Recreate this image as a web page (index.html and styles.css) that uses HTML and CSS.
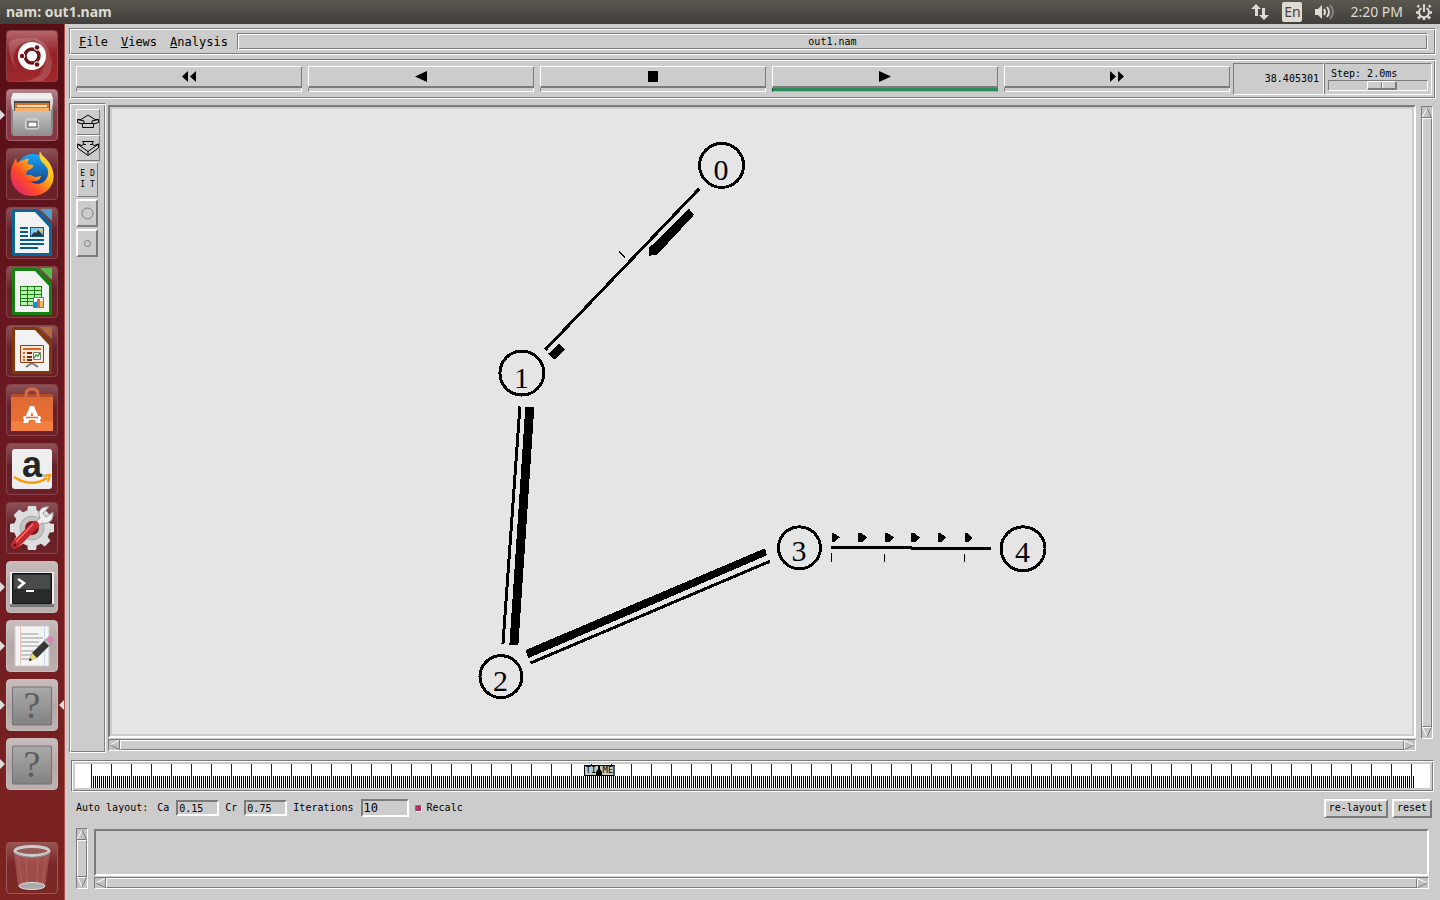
FILE: index.html
```html
<!DOCTYPE html>
<html lang="en">
<head>
<meta charset="utf-8">
<title>nam: out1.nam</title>
<link rel="stylesheet" href="styles.css">
</head>
<body>
<header class="panel">
  <span class="panel-title">nam: out1.nam</span>
  <div class="tray">
    <svg width="18" height="18" viewBox="0 0 18 18" fill="#dfdbd2"><path d="M5 1l5 5H7v7H4V6H0zM13 17l-5-5h3V5h3v7h4z"/></svg>
    <span class="lang">En</span>
    <svg width="20" height="16" viewBox="0 0 20 16"><path d="M0 5h3l4-4v14l-4-4H0z" fill="#dfdbd2"/><g fill="none" stroke-width="2"><path d="M9 5q2 3 0 6" stroke="#dfdbd2"/><path d="M12 3q4 5 0 10" stroke="#dfdbd2"/><path d="M15 1q6 7 0 14" stroke="#85827b"/></g></svg>
    <span class="clock">2:20 PM</span>
    <svg width="16" height="16" viewBox="0 0 16 16" fill="none" stroke="#dfdbd2"><path d="M5.500 4a5 5 0 1 0 5 0" stroke-width="2"/><path d="M8 0v8" stroke-width="2"/><path d="M3 3L1.500 1.500M13 3l1.500-1.500M2.500 8.500H0M13.500 8.500H16M4 12.500L2 14.500M12 12.500l2 2M8 13.500V16" stroke-width="2.500"/></svg>
  </div>
</header>
<main class="desktop">
  <nav class="launcher" aria-label="Launcher">
    <button class="tile red" aria-label="Dash"><svg viewBox="0 0 52 52"><g fill="#fff" opacity=".16"><path d="M8 28C5 10 25 2 37 12 49 23 44 39 33 44 44 32 41 18 30 11 20 6 8 14 8 28z"/><path d="M3 12Q15 5 28 11 14 9 8 22 6 33 12 41 2 30 3 12zM16 51Q40 50 45 25 49 44 36 51z"/></g><circle cx="26" cy="26" r="14" fill="#fff"/><circle cx="26" cy="26" r="7" fill="none" stroke="#6d1517" stroke-width="3.500"/><g fill="#6d1517" stroke="#fff" stroke-width="1"><circle cx="16" cy="26" r="2.800"/><circle cx="31" cy="17.500" r="2.800"/><circle cx="31" cy="34.500" r="2.800"/></g></svg></button>
    <button class="tile rose run" aria-label="Files"><svg viewBox="0 0 52 52"><path d="M7 4h38l2 6v34H5V10z" fill="#d7d7d7"/><path d="M7 4h38l2 6H5z" fill="#eee"/><path d="M8 12h36v10H8z" fill="#484848"/><path d="M9 14h34v8H9z" fill="#e06b24"/><path d="M11 16h30v2H11z" fill="#ffe0b5"/><path d="M9 19h34v3H9z" fill="#f7ae67"/><path d="M5 44V14l2 8v25zM47 44V14l-2 8v25z" fill="#888"/><path d="M7 22h38v25H7z" fill="url(#steel)"/><rect x="19.500" y="30" width="13" height="10" rx="2" fill="#bbb" stroke="#ddd"/><rect x="22" y="33" width="9" height="5" fill="#fff" stroke="#555"/></svg></button>
    <button class="tile" aria-label="Firefox"><svg viewBox="0 0 52 52"><defs><linearGradient id="fox" x1="1" y1="0" x2="0" y2="1"><stop stop-color="#fff04c"/><stop offset=".38" stop-color="#ffb319"/><stop offset=".65" stop-color="#ff4a28"/><stop offset="1" stop-color="#d0178b"/></linearGradient><linearGradient id="blue" x2="0" y2="1"><stop stop-color="#16a7f6"/><stop offset="1" stop-color="#19307b"/></linearGradient></defs><circle cx="27" cy="23" r="17" fill="url(#blue)"/><path d="M34 3c1 5 9 8 12 17 6 15-5 28-20 28C12 48 3 37 5 23 6 17 8 14 10 10l1 5q4-3 7-3 2-2 5-1l-2 5 6 1c1 3-3 4-6 6l-1 4q4-1 7 1c3 2 5 0 8 0-1 5-6 6-11 5 7 6 17 2 18-7 1-5-2-8-7-13-2-4-2-7-1-10z" fill="url(#fox)"/></svg></button>
    <button class="tile" aria-label="Writer"><svg viewBox="0 0 52 52"><path d="M8 2h23l15 15v32H8q-2 0-2-2V4q0-2 2-2z" fill="#08669a"/><path d="M9 5h20l14 15v26H9z" fill="#f2f2f2"/><path d="M34 2h12v12z" fill="#4d9fc7"/><g fill="#075b8b"><path d="M14 20h8v2h-8zM14 24h8v2h-8zM14 28h8v2h-8zM14 32h24v2H14zM14 36h24v2H14zM14 40h18v2H14zM24 20h14v10H24z"/></g><path d="M25 21h12v8H25z" fill="#8ac7ea"/><path d="M25 29l3-4 2 1 2-3 5 5v1z" fill="#333"/><circle cx="35" cy="23" r="1.500" fill="#f1cf32"/></svg></button>
    <button class="tile" aria-label="Calc"><svg viewBox="0 0 52 52"><path d="M8 2h23l15 15v32H8q-2 0-2-2V4q0-2 2-2z" fill="#168013"/><path d="M9 5h20l14 15v26H9z" fill="#f2f2f2"/><path d="M34 2h12v12z" fill="#55bd48"/><path d="M14 20h22v20H14z" fill="#1d7c16"/><g fill="#b9f3ad"><path d="M15 21h6v3h-6zM22 21h6v3h-6zM29 21h6v3h-6zM15 25h6v3h-6zM22 25h6v3h-6zM29 25h6v3h-6zM15 29h6v3h-6zM22 29h6v3h-6zM29 29h6v3h-6zM15 33h6v2h-6zM22 33h6v2h-6zM15 36h6v3h-6zM22 36h6v3h-6z"/></g><path d="M27.500 31.500h10v10h-10z" fill="#fff" stroke="#777"/><path d="M28 36h3v5h-3z" fill="#1688d4"/><path d="M31 33h3v8h-3z" fill="#d9682b"/><path d="M34 35h3v6h-3z" fill="#e7b95c"/></svg></button>
    <button class="tile" aria-label="Impress"><svg viewBox="0 0 52 52"><path d="M8 2h23l15 15v32H8q-2 0-2-2V4q0-2 2-2z" fill="#84370b"/><path d="M9 5h20l14 15v26H9z" fill="#f2f2f2"/><path d="M34 2h12v12z" fill="#b56a3d"/><path d="M14.500 20.500h23v17h-23z" fill="#ffe8d8" stroke="#923b10"/><path d="M17 23h18v2H17z" fill="#d96323"/><path d="M17 27h2v2h-2zM17 31h2v2h-2zM17 34h2v2h-2z" fill="#d96323"/><path d="M21 27h5v2h-5zM21 31h5v2h-5zM21 34h5v2h-5z" fill="#762c09"/><path d="M27.500 27.500h7v7h-7z" fill="#fff" stroke="#777"/><path d="M28 33l2-3 2 1 2-3" fill="none" stroke="#36a136" stroke-width="1.500"/><path d="M26 38l-6 4M26 38l6 4" stroke="#777" stroke-width="2"/></svg></button>
    <button class="tile" aria-label="Software"><svg viewBox="0 0 52 52"><path d="M5 12l3-2h36l3 2v35H5z" fill="url(#bag)"/><path d="M5 13l3-3h36l3 3z" fill="#b84c26"/><path d="M5 37h42v10H5z" fill="#f58b4d" opacity=".6"/><path d="M20 17V10q0-5 6-5t6 5v7" fill="none" stroke="#d96a43" stroke-width="3"/><path d="M17 39l7-17h4l7 17h-5l-4-11-4 11z" fill="#fff"/><rect x="17" y="32" width="18" height="4" rx="2" fill="#fff"/><path d="M20 33.500h12" stroke="#e6692b" stroke-width="1.500"/></svg></button>
    <button class="tile" aria-label="Amazon"><svg viewBox="0 0 52 52"><rect x="6" y="6" width="40" height="40" rx="3" fill="#eee"/><text class="amazon" x="26" y="34" text-anchor="middle">a</text><path d="M8 34q17 11 33 1" fill="none" stroke="#f90" stroke-width="2.500"/><path d="M37 33l7-1-2 7" fill="none" stroke="#f90" stroke-width="2"/></svg></button>
    <button class="tile" aria-label="System Settings"><svg viewBox="0 0 52 52"><g fill="#dedede"><circle cx="26" cy="26" r="18"/><path id="tooth" d="M21 10l1-6h8l1 6z"/><use href="#tooth" transform="rotate(45 26 26)"/><use href="#tooth" transform="rotate(90 26 26)"/><use href="#tooth" transform="rotate(135 26 26)"/><use href="#tooth" transform="rotate(180 26 26)"/><use href="#tooth" transform="rotate(225 26 26)"/><use href="#tooth" transform="rotate(270 26 26)"/><use href="#tooth" transform="rotate(315 26 26)"/></g><circle cx="26" cy="26" r="12" fill="#c4c4c4" stroke="#aaa"/><circle cx="26" cy="26" r="7" fill="#702025"/><path d="M28 22l6-6q-3-6 2-10 4-2 7-1l-6 6 3 4 7-5q1 9-6 11-3 1-5 0l-5 5z" fill="#eee" stroke="#999"/><path d="M9 43L29 23" stroke="#c6282d" stroke-width="8" stroke-linecap="round"/><path d="M10 40L27 22" stroke="#ee7777" stroke-width="1.500"/><circle cx="9" cy="43" r="1.500" fill="#601010"/></svg></button>
    <button class="tile light run" aria-label="Terminal"><svg viewBox="0 0 52 52"><path d="M4 11h44v34H4z" fill="#eee"/><path d="M4 43h44v3H4z" fill="#777"/><path d="M6.500 12.500h39v30h-39z" fill="#292b29" stroke="#111"/><path d="M8 14h36v14H8z" fill="#494b49"/><path d="M12 18l6 4-6 5" fill="none" stroke="#fff" stroke-width="2.500"/><path d="M20 30h8" stroke="#fff" stroke-width="2"/></svg></button>
    <button class="tile light run" aria-label="Text Editor"><svg viewBox="0 0 52 52"><path d="M9 6h34v40H9z" fill="#f4f4f4" stroke="#ccc"/><path d="M14.500 6v40" stroke="#efc5c2"/><path d="M38.500 6v40" stroke="#ccd8f2"/><path d="M15 14h17M15 18h22M15 22h18M15 26h20M15 31h14M15 35h12M15 39h9" stroke="#999"/><path d="M23 41l3-8 14-14 5 5-14 14z" fill="#373737"/><path d="M23 41l3-8 5 5z" fill="#e9da72"/><path d="M23 41l1-3 2 2z" fill="#111"/><path d="M38 21l2-2 5 5-2 2z" fill="#bbb"/><path d="M40 19l3-3q5 0 5 5l-3 3z" fill="#dd83b5"/></svg></button>
    <button class="tile light run focus" aria-label="nam"><svg viewBox="0 0 52 52"><rect x="6.500" y="8" width="39" height="38" rx="1" fill="url(#gray)" stroke="#737373"/><text class="question" x="26" y="39" text-anchor="middle">?</text></svg></button>
    <button class="tile light run" aria-label="nam console"><svg viewBox="0 0 52 52"><rect x="6.500" y="8" width="39" height="38" rx="1" fill="url(#gray)" stroke="#737373"/><text class="question" x="26" y="39" text-anchor="middle">?</text></svg></button>
    <button class="tile trash" aria-label="Trash"><svg viewBox="0 0 52 52"><path d="M8 10h36l-5 35q-13 5-27 0z" fill="#b96562" opacity=".6"/><path d="M12 14l4 30M20 14l1 30M32 14l-1 30M40 14l-4 30" stroke="#d58d89" opacity=".25"/><ellipse cx="26" cy="44" rx="13" ry="3.500" fill="#aaa" stroke="#ddd"/><ellipse cx="26" cy="9" rx="17" ry="4.500" fill="#985a58" stroke="#ccc" stroke-width="3"/><path d="M8 11q18 9 36 0" fill="none" stroke="#888"/></svg></button>
    <svg class="defs" width="0" height="0"><defs><linearGradient id="gray" x2="0" y2="1"><stop stop-color="#aaa"/><stop offset="1" stop-color="#828282"/></linearGradient><linearGradient id="steel" x2="0" y2="1"><stop stop-color="#c4c4c4"/><stop offset="1" stop-color="#8e8e8e"/></linearGradient><linearGradient id="bag" x2="0" y2="1"><stop stop-color="#dc6a37"/><stop offset="1" stop-color="#ee712f"/></linearGradient></defs></svg>
  </nav>
  <section class="window">
    <div class="menubar groove">
      <button><u>F</u>ile</button><button><u>V</u>iews</button><button><u>A</u>nalysis</button>
      <div class="filename groove">out1.nam</div>
    </div>
    <div class="toolbar groove">
      <div class="transport">
        <div class="play-slot"><button aria-label="Rewind"><svg width="14" height="11"><path d="M0 5.500L6 0v11zM8 5.500L14 0v11z"/></svg></button><i></i></div>
        <div class="play-slot"><button aria-label="Play backward"><svg width="12" height="11"><path d="M0 5.500L12 0v11z"/></svg></button><i></i></div>
        <div class="play-slot"><button aria-label="Stop"><svg width="10" height="11"><path d="M0 0h10v11H0z"/></svg></button><i></i></div>
        <div class="play-slot active"><button aria-label="Play"><svg width="12" height="11"><path d="M12 5.500L0 0v11z"/></svg></button><i></i></div>
        <div class="play-slot"><button aria-label="Fast forward"><svg width="14" height="11"><path d="M6 5.500L0 0v11zM14 5.500L8 0v11z"/></svg></button><i></i></div>
      </div>
      <output class="time sunken">38.405301</output>
      <div class="step sunken"><label for="step">Step: 2.0ms</label><input id="step" type="range" min="0" max="100" value="56"></div>
    </div>
    <div class="workspace">
      <aside class="tools groove">
        <button class="zoom" aria-label="Zoom in"><svg width="22" height="16" viewBox="0 0 22 16"><path d="M11 1L4 5.500H.500v3L5.500 10M11 1l7 4.500h3.500v3L16.500 10M5.500 9.500h11v4h-11zM.500 5.500L7 7v2M21.500 5.500L15 7v2"/></svg></button>
        <button class="zoom" aria-label="Zoom out"><svg width="22" height="16" viewBox="0 0 22 16"><path d="M5.500 1.500h11L15 4l2 1.500 4.500-1.500v4L11 15.500.500 8V4L5 5.500 7 4zM.500 4L11 11.500 21.500 4M11 11v4M7 4.500h2M13 4.500h2"/></svg></button>
        <button class="edit"><span>E D</span><span>I T</span></button>
        <button class="size" aria-label="Larger nodes"><svg width="13" height="13"><circle cx="6.500" cy="6.500" r="5.500"/></svg></button>
        <button class="size" aria-label="Smaller nodes"><svg width="9" height="9"><circle cx="4.500" cy="4.500" r="3"/></svg></button>
      </aside>
      <div class="view">
        <div class="canvas">
          <svg viewBox="112 109 1300 626" shape-rendering="crispEdges" role="img" aria-label="Network topology">
            <g fill="none" stroke="#000" stroke-width="3">
              <circle cx="721.500" cy="165.500" r="22"/><circle cx="521.500" cy="373.500" r="22"/><circle cx="500.500" cy="677.500" r="21"/><circle cx="799.500" cy="548.500" r="21"/><circle cx="1023.500" cy="549.500" r="22"/>
              <path d="M699 189L545 350M519.500 407L502.500 645M831 548.500H912M911 549.500H991"/>
              <path d="M530 664L770 562"/>
              <path d="M619 252l6 6" stroke-width="2"/>
              <path d="M831.500 554v9M884.500 555v8M964.500 555v8" stroke-width="1"/>
            </g>
            <path d="M689 209l5 6-37 40-8 1v-8zM559 344l6 6-11 10-6-6zM525 407h9l-16 239h-9zM525 651l240-102 2 7-239 103z"/>
            <path d="M832 534h2l6 4-6 5h-2zM858 534h4l5 4-5 5h-4zM885 534h3l6 4-5 5h-4zM911 534h4l5 4-5 5h-4zM938 534h3l6 4-6 5h-3zM965 534h3l5 5-5 4h-3z"/>
            <g class="node" text-anchor="middle"><text x="721" y="180">0</text><text x="521" y="388">1</text><text x="500" y="692">2</text><text x="799" y="562">3</text><text x="1023" y="563">4</text></g>
          </svg>
        </div>
        <div class="scroll horizontal"><button aria-label="Left"><svg width="11" height="10"><path d="M10.500 0L1 5" class="lit"/><path d="M1 5l9.500 4.500V0"/></svg></button><b></b><button aria-label="Right"><svg width="11" height="10"><path d="M.500 9V.500L10 5" class="lit"/><path d="M10 5L.500 9.500"/></svg></button></div>
      </div>
      <div class="scroll vertical"><button aria-label="Up"><svg width="10" height="11"><path d="M0 10.500L5 1" class="lit"/><path d="M5 1l4.500 9.500H0"/></svg></button><b></b><button aria-label="Down"><svg width="10" height="11"><path d="M9 .500H.500L5 10" class="lit"/><path d="M5 10L9.500 .500"/></svg></button></div>
    </div>
    <div class="timeline groove"><div class="track"><div class="ticks"><div class="marker"><span>TI</span><svg width="6" height="9"><path d="M2 0h2v3l2 3v3H0V6l2-3z"/></svg><span>ME</span></div></div></div></div>
    <form class="layout-row">
      <span class="caption">Auto layout:</span>
      <label for="ca">Ca</label><input id="ca" class="field" value="0.15">
      <label for="cr">Cr</label><input id="cr" class="field" value="0.75">
      <label for="it">Iterations</label><input id="it" class="field big" value="10">
      <input id="recalc" class="check" type="checkbox" checked><label for="recalc">Recalc</label>
      <button type="button" class="push first">re-layout</button><button type="button" class="push">reset</button>
    </form>
    <div class="annotations">
      <div class="scroll vertical"><button aria-label="Up"><svg width="10" height="11"><path d="M0 10.500L5 1" class="lit"/><path d="M5 1l4.500 9.500H0"/></svg></button><b></b><button aria-label="Down"><svg width="10" height="11"><path d="M9 .500H.500L5 10" class="lit"/><path d="M5 10L9.500 .500"/></svg></button></div>
      <div class="notes">
        <div class="list"></div>
        <div class="scroll horizontal"><button aria-label="Left"><svg width="11" height="10"><path d="M10.500 0L1 5" class="lit"/><path d="M1 5l9.500 4.500V0"/></svg></button><b></b><button aria-label="Right"><svg width="11" height="10"><path d="M.500 9V.500L10 5" class="lit"/><path d="M10 5L.500 9.500"/></svg></button></div>
      </div>
    </div>
  </section>
</main>
</body>
</html>
```
FILE: styles.css
```css
* { box-sizing: border-box; }
:root { --face: #ccc; --dark: #7b7b7b; --mono: "DejaVu Sans Mono", monospace; }
body { margin: 0; height: 100vh; display: flex; flex-direction: column; overflow: hidden; font: 10px/12px var(--mono); color: #000; }
button { font: inherit; color: inherit; padding: 0; margin: 0; border: 0; border-radius: 0; background: none; }
svg { display: block; flex: none; }

.panel { height: 24px; flex: none; display: flex; align-items: center; justify-content: space-between; padding: 0 8px 0 6px; background: linear-gradient(#5a574e, #403f3a); color: #dfdbd2; font: 14px/24px "Noto Sans", sans-serif; }
.panel-title { font-weight: bold; }
.tray { display: flex; align-items: center; gap: 13px; }
.lang { width: 20px; height: 20px; border-radius: 2px; background: #dfdbd2; color: #45443f; line-height: 20px; text-align: center; }
.clock { margin: 0 0 0 2px; }

.desktop { flex: 1; min-height: 0; display: flex; }
.launcher { width: 65px; flex: none; display: flex; flex-direction: column; gap: 7px; padding: 6px; background: linear-gradient(#570e15, #681820 40%, #7c2421); border-right: 1px solid #ad5148; }
.tile { position: relative; width: 52px; height: 52px; flex: none; border-radius: 4px; border: 1px solid #86454b; background: linear-gradient(#8d5158, #642028 45%, #6b2229); }
.tile svg { position: absolute; left: -1px; top: -1px; width: 52px; height: 52px; }
.tile.red { background: linear-gradient(#b5666a, #932126 45%, #9f282c); }
.tile.rose { background: linear-gradient(#b1858b, #84404a 45%, #8a3442); border-color: #a06770; }
.tile.light { background: linear-gradient(#c9bcbc, #b4a8a8 50%, #bdb0b0); border-color: #c9bebe; }
.tile.trash { margin-top: auto; background: linear-gradient(#955554, #782827 40%, #7b2826); border-color: #9a5957; }
.run::before { content: ""; position: absolute; left: -7px; top: 20px; border: 5px solid transparent; border-left-color: #ddd; border-right: 0; }
.focus::after { content: ""; position: absolute; right: -7px; top: 20px; border: 5px solid transparent; border-right-color: #ddd; border-left: 0; }
.amazon { font: bold 36px "Liberation Sans", sans-serif; fill: #252525; }
.question { font: 38px "Liberation Serif", serif; fill: #5c5c5c; }
.defs { position: absolute; }

.window { flex: 1; min-width: 0; display: flex; flex-direction: column; padding: 4px 4px 11px; background: var(--face); }
.groove { border: 1px solid; border-color: var(--dark) #fff #fff var(--dark); box-shadow: inset 1px 1px #fff, inset -1px -1px var(--dark); }
.sunken { border: 1px solid; border-color: var(--dark) #fff #fff var(--dark); }

.menubar { height: 27px; flex: none; display: flex; align-items: center; gap: 13px; padding: 0 7px 0 9px; font-size: 12px; }
.filename { flex: 1; height: 17px; font-size: 10px; line-height: 16px; text-align: center; margin-left: -4px; }

.toolbar { height: 40px; flex: none; margin-top: 4px; display: flex; padding: 3px 3px 3px 6px; }
.transport { flex: 1; display: flex; gap: 6px; padding-top: 3px; margin-right: 3px; }
.play-slot { flex: 1; }
.play-slot button { width: 100%; height: 22px; display: flex; align-items: center; justify-content: center; border: 1px solid; border-color: #fff var(--dark) var(--dark) #fff; border-bottom-width: 2px; }
.play-slot i { display: block; height: 4px; border: 1px solid; border-color: var(--face) #fff #fff var(--dark); }
.active i { background: #2e8b57; border-color: #2e8b57 #2e8b57 #8bc3a3 #17462c; }
.time { width: 91px; padding: 9px 4px 0; text-align: right; }
.step { width: 108px; padding: 4px 3px 3px; display: flex; flex-direction: column; }
.step label { padding-left: 3px; }
.step input { appearance: none; width: 100%; height: 11px; margin: 0; background: var(--face); border: 1px solid; border-color: var(--dark) #fff #fff var(--dark); }
.step input::-webkit-slider-thumb { appearance: none; width: 30px; height: 9px; border: 1px solid; border-color: #fff var(--dark) var(--dark) #fff; box-shadow: inset -1px -1px var(--dark); background: linear-gradient(90deg, var(--face) 13px, var(--dark) 13px 14px, #fff 14px 15px, var(--face) 15px); }

.workspace { flex: 1; min-height: 0; display: flex; margin-top: 4px; }
.tools { width: 37px; flex: none; display: flex; flex-direction: column; padding: 5px 6px; }
.tools button { display: flex; align-items: center; justify-content: center; border: 1px solid; border-color: #fff var(--dark) var(--dark) #fff; }
.tools path { fill: none; stroke: #000; }
.tools .zoom { width: 24px; height: 26px; }
.tools .edit { width: 21px; height: 35px; margin: 1px 0 2px 1px; flex-direction: column; gap: 1px; font-size: 8px; line-height: 10px; }
.tools .size { width: 22px; height: 28px; margin-bottom: 2px; border-width: 2px; }
.tools circle { fill: none; stroke: var(--dark); }
.view { flex: 1; min-width: 0; display: flex; flex-direction: column; padding: 2px 0 2px; margin-left: 2px; }
.canvas { flex: 1; min-height: 0; border: 2px solid; border-color: var(--dark) #fff #fff var(--dark); padding: 2px; margin-bottom: 1px; }
.canvas svg { width: 100%; height: 100%; background: #e5e5e5; }
.node { font: 30px "Liberation Serif", serif; }

.scroll { display: flex; flex: none; border: 1px solid; border-color: var(--dark) #fff #fff var(--dark); background: #c3c3c3; }
.scroll b { flex: 1; background: var(--face); border: 1px solid; border-color: #fff var(--dark) var(--dark) #fff; }
.scroll path { fill: none; stroke: var(--dark); }
.scroll .lit { stroke: #fff; }
.horizontal { height: 12px; }
.vertical { width: 12px; flex-direction: column; }
.workspace > .vertical { margin: 3px 3px 14px 5px; }

.timeline { flex: none; margin: 7px 2px 0; padding: 3px; }
.track { height: 24px; padding: 0 16px; background: #fff; }
.ticks { position: relative; height: 24px; background: repeating-linear-gradient(90deg, #00f 0 1px, transparent 1px 20px), repeating-linear-gradient(90deg, #000 0 1px, #fff 1px 2px) bottom / 100% 12px no-repeat; }
.marker { position: absolute; left: 37.3%; top: 1px; width: 31px; height: 11px; display: flex; align-items: center; justify-content: center; border: 1px solid #000; border-right: 2px solid #555; background: #c3c9c3; font-size: 9px; line-height: 9px; }
.marker span { width: 11px; }

.layout-row { flex: none; height: 20px; margin: 6px 4px 0 7px; display: flex; align-items: center; }
.layout-row label { margin-right: 7px; }
.caption { margin-right: 9px; }
.field { width: 43px; height: 16px; margin: 0 6px 0 0; padding: 0 0 0 1px; border: 2px solid; border-color: var(--dark) #fff #fff var(--dark); border-radius: 0; background: var(--face); font: 10px/12px var(--mono); }
.field.big { width: 48px; height: 18px; font-size: 12px; }
.check { appearance: none; width: 7px; height: 7px; margin: 0 5px 0 0; border: 1px solid; border-color: var(--dark) #fff #fff var(--dark); background: #b03060; }
.push { height: 19px; padding: 0 4px; border: 1px solid; border-color: #fff var(--dark) var(--dark) #fff; box-shadow: inset 1px 1px #fff, inset -1px -1px var(--dark); }
.push.first { margin-left: auto; margin-right: 4px; }

.annotations { flex: none; height: 61px; display: flex; gap: 6px; margin: 10px 7px 0; }
.notes { flex: 1; display: flex; flex-direction: column; padding-top: 1px; }
.list { flex: 1; margin-bottom: 1px; border: 2px solid; border-color: var(--dark) #fff #fff var(--dark); }
```
